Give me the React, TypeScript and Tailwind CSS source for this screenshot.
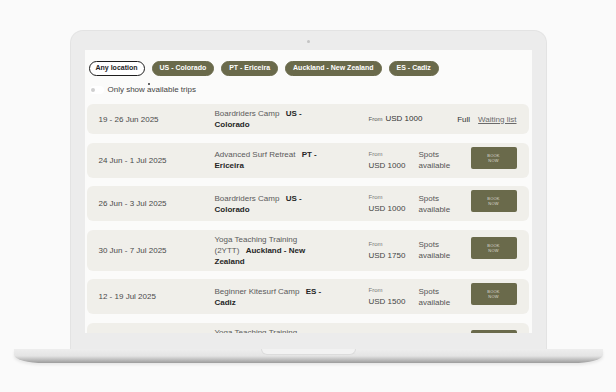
import React from 'react';

type Trip = {
  date: string;
  title: string;
  place: string;
  price: string;
  full?: boolean;
};

const trips: Trip[] = [
  { date: '19 - 26 Jun 2025', title: 'Boardriders Camp', place: 'US - Colorado', price: 'USD 1000', full: true },
  { date: '24 Jun - 1 Jul 2025', title: 'Advanced Surf Retreat', place: 'PT - Ericeira', price: 'USD 1000' },
  { date: '26 Jun - 3 Jul 2025', title: 'Boardriders Camp', place: 'US - Colorado', price: 'USD 1000' },
  { date: '30 Jun - 7 Jul 2025', title: 'Yoga Teaching Training (2YTT)', place: 'Auckland - New Zealand', price: 'USD 1750' },
  { date: '12 - 19 Jul 2025', title: 'Beginner Kitesurf Camp', place: 'ES - Cadiz', price: 'USD 1500' },
  { date: '4 - 11 Aug 2025', title: 'Yoga Teaching Training (2YTT)', place: 'Auckland - New Zealand', price: 'USD 1750' },
];

const locations = ['US - Colorado', 'PT - Ericeira', 'Auckland - New Zealand', 'ES - Cadiz'];

function TripRow({ trip }: { trip: Trip }) {
  return (
    <div className="grid grid-cols-[116px_154px_50px_52px_46px] items-center rounded-[6px] bg-[#f0efea] px-[12px] py-[4px] text-[8px] leading-[11px]">
      <div className="text-[#4a4a4a]">{trip.date}</div>
      <div className="w-[109px] text-[#5a5a5a]">
        {trip.title}{' '}
        <span className="ml-[4px] font-bold text-[#262626]">{trip.place}</span>
      </div>
      {trip.full ? (
        <>
          <div className="whitespace-nowrap text-[#333]">
            <span className="mr-[3px] text-[6px] text-[#555]">From</span>
            {trip.price}
          </div>
          <div className="col-span-2 flex justify-end gap-[8px] whitespace-nowrap">
            <span className="text-[#333]">Full</span>
            <span className="text-[#6a6a6a] underline">Waiting list</span>
          </div>
        </>
      ) : (
        <>
          <div className="flex flex-col text-[#444]">
            <span className="mb-[1px] text-[6px] leading-[9px] text-[#777]">From</span>
            <span>{trip.price}</span>
          </div>
          <div className="text-[#555]">
            Spots
            <br />
            available
          </div>
          <div className="pb-[5px]">
            <div className="flex h-[22px] w-[46px] flex-col items-center justify-center rounded-[2px] bg-[#6a6a4b] text-[4px] leading-[5px] tracking-[0.2px] text-[#dcdcd2]">
              <span>BOOK</span>
              <span>NOW</span>
            </div>
          </div>
        </>
      )}
    </div>
  );
}

export default function App() {
  return (
    <div
      className="flex h-[392px] w-[616px] flex-col items-center overflow-hidden bg-[#fafafa]"
      style={{ fontFamily: '"Liberation Sans", Arial, sans-serif' }}
    >
      {/* lid */}
      <div className="mt-[30px] flex h-[319px] w-[477px] flex-col items-center rounded-t-[13px] border border-b-0 border-[#e3e3e3] bg-[#ececec] px-[14px]">
        <div className="mt-[9px] h-[3px] w-[3px] rounded-full bg-[#c4c4c4]" />
        <div className="mt-[7px] h-[283px] w-[447px] overflow-hidden bg-[#fbfbfa] pt-[11px]">
          <div className="ml-[4px] flex gap-[7px]">
            <div className="flex h-[15px] items-center rounded-full border-[1.5px] border-[#1e1e1e] bg-white px-[6px] text-[7px] font-bold text-[#1e1e1e]">
              Any location
            </div>
            {locations.map((l) => (
              <div
                key={l}
                className="flex h-[15px] items-center rounded-full border-[1.5px] border-[#6a6a4b] bg-[#6a6a4b] px-[7px] text-[7px] font-bold text-white"
              >
                {l}
              </div>
            ))}
          </div>
          <div className="relative ml-[5px] mt-[9px] flex h-[10px] items-center gap-[4px] text-[8px] text-[#444]">
            <div className="flex h-[8px] w-[14px] items-center rounded-full bg-white pl-[1px]">
              <div className="h-[4px] w-[4px] rounded-full bg-[#cfcfcf]" />
            </div>
            <span>Only show available trips</span>
            <div className="absolute left-[58px] top-[-2px] h-[2px] w-[2px] rounded-full bg-[#333]" />
          </div>
          <div className="ml-[2px] mt-[9px] flex w-[442px] flex-col gap-[8.5px]">
            {trips.map((t, i) => (
              <TripRow key={i} trip={t} />
            ))}
          </div>
        </div>
      </div>
      {/* base */}
      <div className="relative h-[14px] w-[589px] rounded-b-[30px_8px] bg-gradient-to-b from-[#eeeeee] via-[#e4e4e4] to-[#9c9c9c] shadow-[0_2px_3px_rgba(0,0,0,0.08)]">
        <div className="absolute left-[247px] top-0 h-[6px] w-[95px] rounded-b-[6px] border border-t-0 border-[#dcdcdc] bg-[#f2f2f2]" />
      </div>
    </div>
  );
}
